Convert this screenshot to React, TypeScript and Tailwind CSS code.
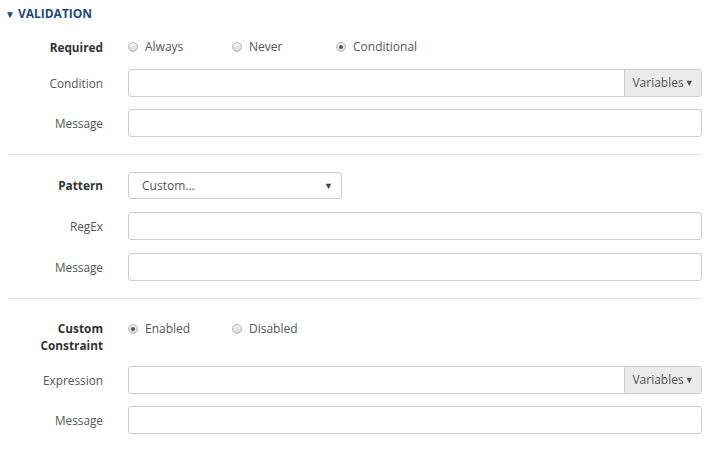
import React from 'react';

const Radio: React.FC<{ checked?: boolean; label: string }> = ({ checked, label }) => (
  <label className="flex items-center w-[104px] shrink-0 text-[12px] text-[#555]">
    <span className="relative w-[10px] h-[10px] rounded-full border border-[#b5b5b5] bg-gradient-to-b from-[#f4f4f4] to-[#d8d8d8] flex items-center justify-center">
      {checked && <span className="w-[4px] h-[4px] rounded-full bg-[#555]" />}
    </span>
    <span className="ml-[7px]">{label}</span>
  </label>
);

const Label: React.FC<{ children: React.ReactNode; bold?: boolean }> = ({ children, bold }) => (
  <div
    className={`w-[103px] shrink-0 text-right text-[11.8px] leading-[17px] ${
      bold ? 'font-bold text-[#333]' : 'text-[#555]'
    }`}
  >
    {children}
  </div>
);

const TextInput: React.FC = () => (
  <div className="flex-1 h-[28px] border border-[#cccccc] rounded-[3px] bg-white" />
);

const VariablesInput: React.FC = () => (
  <div className="flex-1 flex h-[28px] border border-[#cccccc] rounded-[3px] bg-white overflow-hidden">
    <div className="flex-1" />
    <div className="w-[77px] border-l border-[#cccccc] bg-[#ebebeb] flex items-center justify-center text-[12px] text-[#555]">
      Variables<span className="text-[9px] ml-[1px]">▼</span>
    </div>
  </div>
);

const Row: React.FC<{ label: React.ReactNode; bold?: boolean; className?: string; children: React.ReactNode }> = ({
  label,
  bold,
  className,
  children,
}) => (
  <div className={`flex items-center ${className ?? ''}`}>
    <Label bold={bold}>{label}</Label>
    <div className="ml-[25px] flex-1 flex items-center">{children}</div>
  </div>
);

export default function App() {
  return (
    <div
      className="w-[714px] h-[454px] bg-white pr-[12px]"
      style={{ fontFamily: '"Open Sans", "Noto Sans", sans-serif' }}
    >
      <div className="h-[28px] flex items-center pl-[5px] text-[#1f4a7c] font-bold text-[12px]">
        <span className="text-[10px] mr-[3px]">▼</span>
        VALIDATION
      </div>

      <Row label="Required" bold className="mt-[5px] h-[28px]">
        <Radio label="Always" />
        <Radio label="Never" />
        <Radio label="Conditional" checked />
      </Row>
      <Row label="Condition" className="mt-[8px]">
        <VariablesInput />
      </Row>
      <Row label="Message" className="mt-[12px]">
        <TextInput />
      </Row>

      <div className="ml-[8px] mt-[17px] border-t border-[#e6e6e6]" />

      <Row label="Pattern" bold className="mt-[17px]">
        <div className="w-[214px] h-[27px] border border-[#cccccc] rounded-[3px] flex items-center justify-between pl-[13px] pr-[8px] text-[12px] text-[#555]">
          <span>Custom...</span>
          <span className="text-[9px] text-[#444]">▼</span>
        </div>
      </Row>
      <Row label="RegEx" className="mt-[13px]">
        <TextInput />
      </Row>
      <Row label="Message" className="mt-[13px]">
        <TextInput />
      </Row>

      <div className="ml-[8px] mt-[17px] border-t border-[#e6e6e6]" />

      <div className="flex items-start mt-[21px]">
        <Label bold>
          Custom
          <br />
          Constraint
        </Label>
        <div className="ml-[25px] flex-1 flex items-center h-[17px]">
          <Radio label="Enabled" checked />
          <Radio label="Disabled" />
        </div>
      </div>
      <Row label="Expression" className="mt-[12px]">
        <VariablesInput />
      </Row>
      <Row label="Message" className="mt-[12px]">
        <TextInput />
      </Row>
    </div>
  );
}
